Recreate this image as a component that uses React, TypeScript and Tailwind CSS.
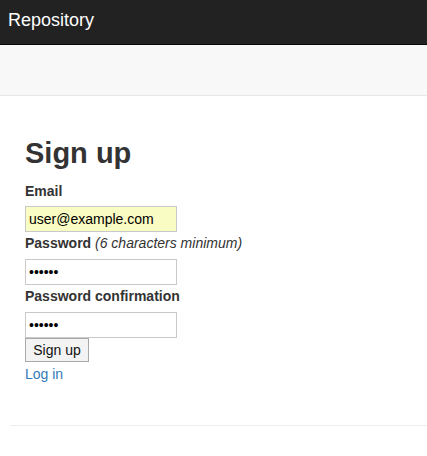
export default function App() {
  return (
    <div className="w-[427px] h-[456px] bg-white overflow-hidden font-['Liberation_Sans',Arial,sans-serif] text-[14px] text-[#333]">
      {/* Navbar */}
      <div className="h-[45px] bg-[#222] border-b border-[#080808] flex items-center px-[8px]">
        <span className="text-white text-[18px] leading-none pb-[4px]">Repository</span>
      </div>

      {/* Sub bar */}
      <div className="h-[51px] bg-[#f8f8f8] border-b border-[#e7e7e7]"></div>

      {/* Content */}
      <div className="px-[25px] pt-[39px]">
        <h1 className="text-[29px] font-bold leading-[36px] text-[#333]">Sign up</h1>
        <form className="mt-[10px]" onSubmit={(e) => e.preventDefault()}>
          <label className="block font-bold leading-[20px]">Email</label>
          <input
            type="email"
            defaultValue="user@example.com"
            className="block mt-[5px] w-[152px] h-[26px] bg-[#fafdc3] border border-[#c9c9c9] px-[3px] text-[14px] text-black outline-none"
          />
          <label className="block leading-[20px] mt-[1px]">
            <span className="font-bold">Password</span> <em className="text-[#333]">(6 characters minimum)</em>
          </label>
          <input
            type="password"
            defaultValue="secret"
            className="block mt-[6px] w-[152px] h-[26px] bg-white border border-[#c9c9c9] px-[3px] text-[14px] text-black outline-none"
          />
          <label className="block font-bold leading-[20px] mt-[1px]">Password confirmation</label>
          <input
            type="password"
            defaultValue="secret"
            className="block mt-[6px] w-[152px] h-[26px] bg-white border border-[#c9c9c9] px-[3px] text-[14px] text-black outline-none"
          />
          <button
            type="submit"
            className="block w-[64px] h-[24px] bg-[#f3f3f3] border border-[#a9a9a9] text-[14px] text-[#111] leading-none"
          >
            Sign up
          </button>
        </form>
        <a href="#" className="block mt-[2px] text-[#337ab7] leading-[20px]">Log in</a>
      </div>

      <div className="ml-[10px] mt-[41px] border-t border-[#eee]"></div>
    </div>
  );
}
